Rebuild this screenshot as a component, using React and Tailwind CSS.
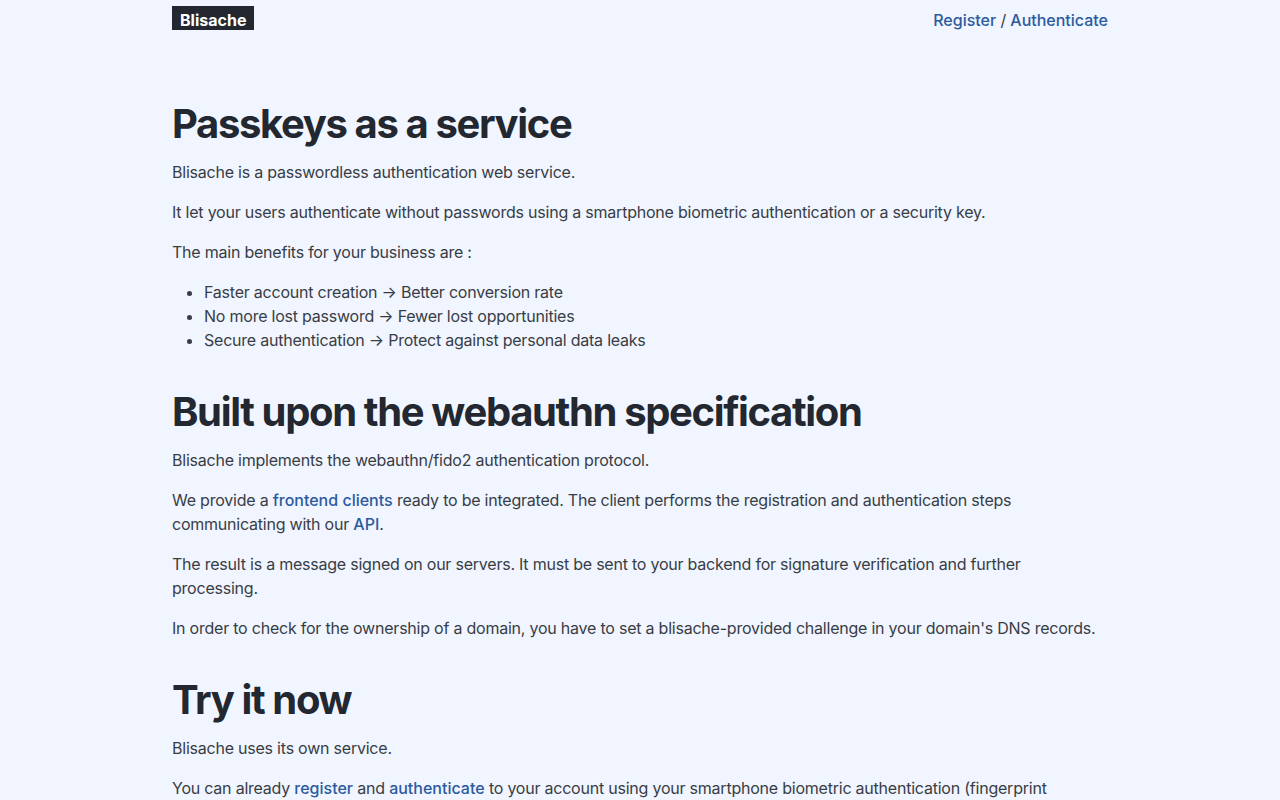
const link = 'text-[#2c5a9e] font-medium tracking-normal hover:underline';

const Header = () => (
  <header className="flex items-start justify-between pt-1.5 h-16">
    <a href="#" className="block h-6 overflow-hidden bg-[#23272f] text-white font-bold text-base leading-[28px] tracking-normal px-2">
      Blisache
    </a>
    <nav className="text-base leading-6 mt-0.5 text-[#383d45]">
      <a href="#" className={link}>Register</a>
      {' / '}
      <a href="#" className={link}>Authenticate</a>
    </nav>
  </header>
);

export default function App() {
  return (
    <div
      className="min-h-screen bg-[#f0f5ff] text-[#383d45] text-base leading-6 tracking-[-0.014em]"
      style={{ fontFamily: 'Inter, "Noto Sans", sans-serif' }}
    >
      <div className="max-w-[936px] mx-auto">
        <Header />
        <main className="[&_h2]:text-[40px] [&_h2]:leading-[48px] [&_h2]:font-bold [&_h2]:text-[#23272f] [&_h2]:tracking-[-0.034em] [&_h2]:mt-9 [&_h2]:mb-3 [&_p]:mb-4">
          <h2>Passkeys as a service</h2>
          <p>Blisache is a passwordless authentication web service.</p>
          <p>It let your users authenticate without passwords using a smartphone biometric authentication or a security key.</p>
          <p>The main benefits for your business are :</p>
          <ul className="list-disc pl-8 mb-4">
            <li>Faster account creation → Better conversion rate</li>
            <li>No more lost password → Fewer lost opportunities</li>
            <li>Secure authentication → Protect against personal data leaks</li>
          </ul>

          <h2>Built upon the webauthn specification</h2>
          <p>Blisache implements the webauthn/fido2 authentication protocol.</p>
          <p>
            We provide a <a href="#" className={link}>frontend clients</a> ready to be integrated. The client performs the registration and authentication steps communicating with our <a href="#" className={link}>API</a>.
          </p>
          <p>The result is a message signed on our servers. It must be sent to your backend for signature verification and further processing.</p>
          <p>In order to check for the ownership of a domain, you have to set a blisache-provided challenge in your domain's DNS records.</p>

          <h2>Try it now</h2>
          <p>Blisache uses its own service.</p>
          <p>
            You can already <a href="#" className={link}>register</a> and <a href="#" className={link}>authenticate</a> to your account using your smartphone biometric authentication (fingerprint recognition, face ID) or a security key.
          </p>
        </main>
      </div>
    </div>
  );
}
